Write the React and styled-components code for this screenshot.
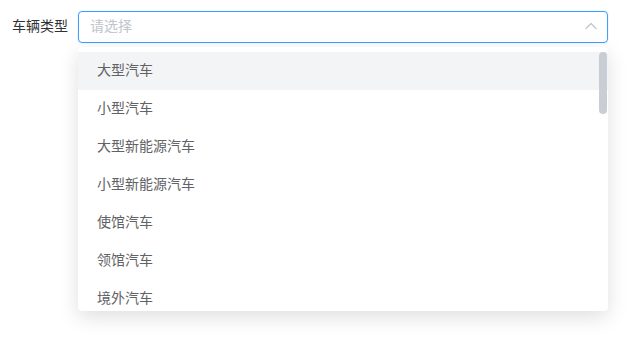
import React from "react";
import styled, { createGlobalStyle } from "styled-components";

const Global = createGlobalStyle`
  html, body { margin: 0; padding: 0; background: #fff; }
  body { font-family: "Noto Sans CJK SC", "Noto Sans", sans-serif; }
  * { box-sizing: border-box; }
`;

const Page = styled.div`
  padding: 11px 20px 0 12px;
  height: 339px;
`;

const FormRow = styled.div`
  display: flex;
  align-items: flex-start;
  gap: 10px;
`;

const Label = styled.label`
  font-size: 14px;
  color: #303133;
  line-height: 28px;
  height: 32px;
  white-space: nowrap;
`;

const SelectWrap = styled.div`
  position: relative;
  width: 530px;
`;

const Input = styled.div`
  height: 32px;
  border: 1px solid #409eff;
  border-radius: 4px;
  background: #fff;
  display: flex;
  align-items: center;
  justify-content: space-between;
  padding: 0 9px 0 11px;
  box-shadow: 0 0 0 1px rgba(64, 158, 255, 0.08);
`;

const Placeholder = styled.span`
  font-size: 14px;
  line-height: 26px;
  padding-bottom: 4px;
  color: #c0c4cc;
`;

const Arrow = styled.svg`
  width: 14px;
  height: 14px;
  margin-top: -2px;
  color: #c0c4cc;
`;

const Panel = styled.div`
  position: absolute;
  top: calc(100% + 4px);
  left: 0;
  width: 530px;
  height: 264px;
  background: #fff;
  border-radius: 4px;
  box-shadow: 0 6px 20px rgba(0, 0, 0, 0.13);
  overflow: hidden;
  z-index: 10;
`;

const List = styled.ul`
  list-style: none;
  margin: 0;
  padding: 5px 0;
  height: 100%;
  overflow-y: auto;
  scrollbar-width: none;
  &::-webkit-scrollbar { display: none; }
`;

const Item = styled.li`
  height: 38px;
  line-height: 34px;
  padding: 0 20px 0 19px;
  font-size: 14px;
  color: #606266;
  background: ${(p) => (p.$hover ? "#f3f4f6" : "transparent")};
  white-space: nowrap;
`;

const Thumb = styled.div`
  position: absolute;
  top: 5px;
  right: 1px;
  width: 8px;
  height: 62px;
  border-radius: 4px;
  background: #c9cdd4;
`;

const options = [
  "大型汽车",
  "小型汽车",
  "大型新能源汽车",
  "小型新能源汽车",
  "使馆汽车",
  "领馆汽车",
  "境外汽车",
  "外籍汽车",
  "普通摩托车",
  "轻便摩托车",
  "使馆摩托车",
  "领馆摩托车",
  "境外摩托车",
  "外籍摩托车",
  "低速车",
  "拖拉机",
  "挂车",
  "教练汽车",
  "教练摩托车",
  "试验汽车",
  "试验摩托车",
  "临时入境汽车",
  "临时入境摩托车",
  "临时行驶车",
  "警用汽车",
  "警用摩托",
  "香港入出境车",
  "澳门入出境车",
];

export default function App() {
  return (
    <>
      <Global />
      <Page>
        <FormRow>
          <Label>车辆类型</Label>
          <SelectWrap>
            <Input>
              <Placeholder>请选择</Placeholder>
              <Arrow viewBox="0 0 14 14" fill="none">
                <path d="M2 9.5 L7 4.5 L12 9.5" stroke="currentColor" strokeWidth="1.2" strokeLinecap="round" strokeLinejoin="round" />
              </Arrow>
            </Input>
            <Panel>
              <List>
                {options.map((o, i) => (
                  <Item key={o} $hover={i === 0}>{o}</Item>
                ))}
              </List>
              <Thumb />
            </Panel>
          </SelectWrap>
        </FormRow>
      </Page>
    </>
  );
}
